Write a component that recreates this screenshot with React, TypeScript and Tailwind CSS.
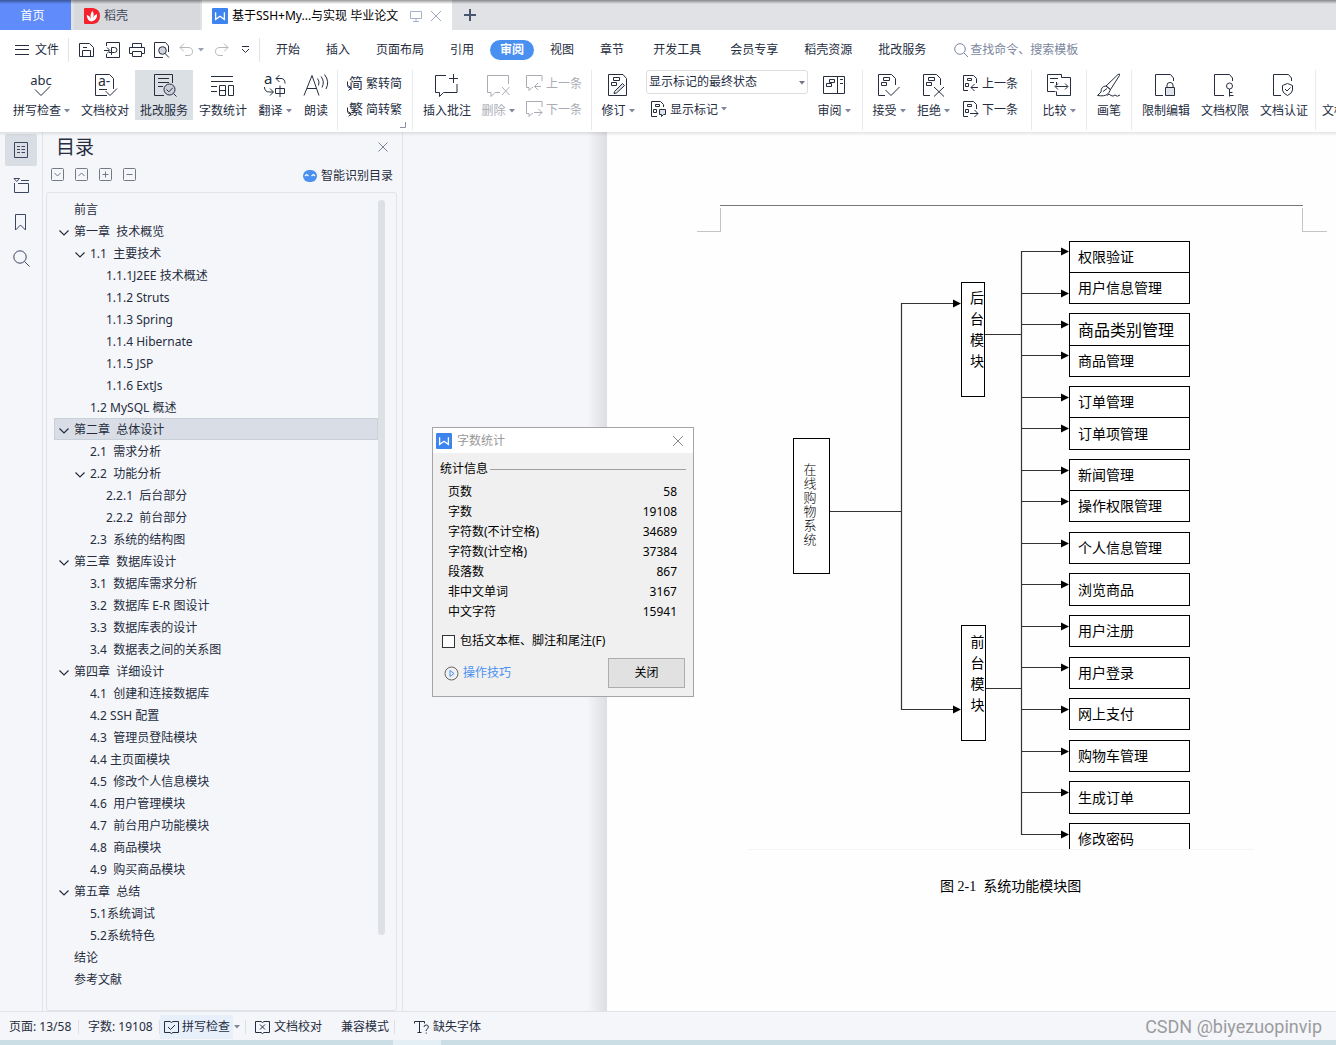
import type { ReactNode } from "react";

const SANS = "font-['Noto_Sans','Noto_Sans_CJK_SC',sans-serif]";

function Svg({ w, h, children, className = "" }: { w: number; h: number; children: ReactNode; className?: string }) {
  return (
    <svg
      width={w}
      height={h}
      viewBox={`0 0 ${w} ${h}`}
      fill="none"
      stroke="currentColor"
      strokeWidth="1"
      className={`shrink-0 overflow-visible ${className}`}
      aria-hidden="true"
    >
      {children}
    </svg>
  );
}

function Caret({ className = "text-[#7f879b]" }: { className?: string }) {
  return (
    <svg width="6" height="4" viewBox="0 0 6 4" className={`shrink-0 ${className}`} aria-hidden="true">
      <path d="M0 0h6L3 3.6z" fill="currentColor" />
    </svg>
  );
}

function WpsLogo() {
  return (
    <svg width="16" height="16" viewBox="0 0 16 16" className="shrink-0" aria-hidden="true">
      <rect width="16" height="16" rx="1" fill="#3d84ee" />
      <path d="M3.600 4.200v7.200l4.400-3.200 4.400 3.200V4.200" fill="none" stroke="#fff" strokeWidth="1.300" />
    </svg>
  );
}

/* ---------- ribbon drawings ---------- */

const DOC = "M17.500 12V5.500L13.500 1.500H.5V22.500H7";

const SpellIcon = () => (
  <Svg w={24} h={24}>
    <text x="11" y="12" textAnchor="middle" fontSize="13" fill="currentColor" stroke="none">abc</text>
    <path d="M5 16.500l6 6 9-9" />
  </Svg>
);
const ProofIcon = () => (
  <Svg w={24} h={24}>
    <path d="M14 22.500H2.500V1.500H16.500L20.500 5.500V16" />
    <text x="5" y="13" fontSize="14" fill="currentColor" stroke="none">a-</text>
    <path d="M6 16.500h8M12.500 18l4.500 4.500 7-7" />
  </Svg>
);
const CorrectIcon = () => (
  <Svg w={24} h={24}>
    <path d="M12 22.500H2.500V1.500H20.500V10M6 5.500h11M6 9.500h11M6 13.500h5" />
    <circle cx="17.500" cy="16.500" r="5.500" fill="#c9ced8" />
    <path d="M14.500 16.500l2.300 2.300 4-4M21.500 20.500l3 3" />
  </Svg>
);
const CountIcon = () => (
  <Svg w={24} h={24}>
    <path d="M0 3.500h22M0 8.500h22M0 13.500h6M0 18.500h6M9 12.500h5.500v10H8.500v-10zM8.500 17.500h6M17.500 12.500h5v10h-5z" />
  </Svg>
);
const TranslateIcon = () => (
  <Svg w={24} h={24}>
    <text x="1" y="11" fontSize="15" fill="currentColor" stroke="none">a</text>
    <path d="M16.500 2L13 5.500 16.500 9M13 5.500h5q4 0 4 5M1.500 14q0 5 5 5h3.500M7 15.500l3.500 3.500L7 22.500M12.500 15.500h9v5h-9zM17 12.500V24" />
  </Svg>
);
const ReadIcon = () => (
  <Svg w={26} h={24}>
    <path d="M1 22.500L9 2.500l7 20M4 15.500h9.500M14.500 5.500q2.500 3 1 7M18 3.500q4 5 1 11M21.500 1.500q5.500 7 1.500 14.500" />
  </Svg>
);
const CommentIcon = () => (
  <Svg w={26} h={24}>
    <path d="M12 2.500H1.500v17h4v4l4-4h13.500V11M19.500 1v9M15 5.500h9" />
  </Svg>
);
const DeleteIcon = () => (
  <Svg w={24} h={24}>
    <path d="M22.500 11V2.500H1.500v17h3.500v4l4-4h5M16 14l7.500 8M23.500 14L16 22" />
  </Svg>
);
const ReviseIcon = () => (
  <Svg w={20} h={24}>
    <path d="M.5 1.500H15L18.500 5.500V22.500H.5zM5.500 4.500h6v3h-6zM3.500 9.500h5v3h-5z" />
    <path d="M6.500 18.500l8-8 2 2-8 7.500-2.500.5z" fill="#dfe3ea" />
  </Svg>
);
const PaneIcon = () => (
  <Svg w={22} h={24}>
    <path d="M.5 3.500h21v17H.5zM14.500 3.500v17M6.500 6.500h5v3h-5zM3.500 10.500h5v3h-5zM17 6.500h3M17 10.500h3" />
  </Svg>
);
const AcceptIcon = () => (
  <Svg w={22} h={24}>
    <path d={DOC} />
    <path d="M5.500 4.500h6v3h-6zM3.500 9.500h5v3h-5zM7.500 17l5.500 5.500 8.500-8.500" />
  </Svg>
);
const RejectIcon = () => (
  <Svg w={22} h={24}>
    <path d={DOC} />
    <path d="M5.500 4.500h6v3h-6zM3.500 9.500h5v3h-5zM11 14l10 9.500M21 14l-10 9.500" />
  </Svg>
);
const CompareIcon = () => (
  <Svg w={26} h={24}>
    <path d="M9.500 18.500H1.500V1.500h14V4.500M4 5.500h8M4 9.500h4M15.500 4.500h9v18h-14v-4M10.500 12V9M9.500 13.500h12M12 10.500l-3 3 3 3M19 10.500l3 3-3 3" />
  </Svg>
);
const BrushIcon = () => (
  <Svg w={26} h={24}>
    <path d="M10 13L22 1.500q2-1.500 1.500 1L14.500 16.500zM10 13q-5 0-5 6l-3.500 3.500q7 1 9.500-1 2.500-2 3.500-5zM7 18.500l4-3M11 22.500q2-3 4 0 2 1.500 4-.5 2 2.500 5 0" />
  </Svg>
);
const LockIcon = () => (
  <Svg w={22} h={24}>
    <path d="M18.500 8V5L15.500 1.500H.5V22.500H8" />
    <path d="M10.500 14.500h9v8h-9z" fill="#dfe3ea" />
    <path d="M12 14.500v-2.500q0-2.500 3-2.500t3 2.500v2.500" />
  </Svg>
);
const KeyIcon = () => (
  <Svg w={22} h={24}>
    <path d="M18.500 8V5L15.500 1.500H.5V22.500H10" />
    <circle cx="15.500" cy="13" r="3" />
    <path d="M15.500 16v7.500M15.500 19.500h3M15.500 22.500h4" />
  </Svg>
);
const ShieldIcon = () => (
  <Svg w={22} h={24}>
    <path d="M18.500 8V5L15.500 1.500H.5V22.500H8" />
    <path d="M14.500 10.500l5 2v4.500q0 3-5 5.500-5-2.500-5-5.500v-4.500zM12 16l2 2 3.500-3.500" />
  </Svg>
);
const SmallComment = ({ next = false }: { next?: boolean }) => (
  <Svg w={17} h={16}>
    <path d="M16 6V.5H.5v12h2.500v3l3-3h1" />
    <path d={next ? "M8 11.500h8M12.500 8l3.500 3.500-3.500 3.500" : "M15 11.500H8.500M12 8l-3.500 3.500L12 15"} />
  </Svg>
);
const SmallDoc = ({ next = false }: { next?: boolean }) => (
  <Svg w={16} h={16}>
    <path d="M5 15.500H.5V.5h10l3 3V8M4.500 3.500h4v2h-4zM2.500 8.500h3v3h-3z" />
    <path d={next ? "M7 12.500h8M11.500 9l3.500 3.500-3.500 3.500" : "M15 12.500H8M11.500 9L8 12.500l3.500 3.500"} />
  </Svg>
);
const MarkupIcon = () => (
  <Svg w={16} h={16}>
    <path d="M6 15.500H.5V.5h9l3 3V6M4.500 3.500h4v2h-4zM2.500 8.500h3v3h-3z" />
    <path d="M8.500 8.500h6v5h-2l-2 2v-2h-2z" fill="#dfe3ea" />
  </Svg>
);
const Convert = ({ glyph }: { glyph: string }) => (
  <Svg w={16} h={16}>
    <text x="2" y="13" fontSize="14" fill="currentColor" stroke="none">{glyph}</text>
    <path d="M.5 6.500v3.500q0 3 3 3M1.500 10.500L4 13l-2.500 2.500" />
  </Svg>
);

/* ---------- ribbon parts ---------- */

function Big({ icon, label, caret, w, active, muted }: { icon: ReactNode; label: string; caret?: boolean; w: string; active?: boolean; muted?: boolean }) {
  return (
    <button
      type="button"
      disabled={muted}
      className={`flex h-[50px] shrink-0 flex-col items-center pt-[3px] ${w} ${active ? "bg-[#dbe0e5]" : ""} ${muted ? "text-[#a9acb3]" : ""}`}
    >
      {icon}
      <span className="mt-1.5 flex items-center gap-[3px] leading-4 whitespace-nowrap">
        {label}
        {caret && <Caret />}
      </span>
    </button>
  );
}

function Small({ icon, label, muted, caret }: { icon: ReactNode; label: string; muted?: boolean; caret?: boolean }) {
  return (
    <button
      type="button"
      disabled={muted}
      className={`flex h-[26px] items-center gap-[3px] leading-4 whitespace-nowrap ${muted ? "text-[#a9acb3]" : ""}`}
    >
      {icon}
      <span className="pt-0.5">{label}</span>
      {caret && <Caret />}
    </button>
  );
}

function Group({ children, className = "" }: { children: ReactNode; className?: string }) {
  return <div className={`relative flex h-[60px] shrink-0 border-r border-[#e9eaed] ${className}`}>{children}</div>;
}

function Ribbon() {
  return (
    <div className="flex h-[66px] overflow-hidden bg-white pt-1">
      <Group className="gap-px pr-[3px] pl-2">
        <Big w="w-[67px]" icon={<SpellIcon />} label="拼写检查" caret />
        <Big w="w-[58px]" icon={<ProofIcon />} label="文档校对" />
        <Big w="w-[58px]" icon={<CorrectIcon />} label="批改服务" active />
        <Big w="w-[58px]" icon={<CountIcon />} label="字数统计" />
        <Big w="w-[44px]" icon={<TranslateIcon />} label="翻译" caret />
        <Big w="w-[36px]" icon={<ReadIcon />} label="朗读" />
      </Group>
      <Group className="w-[75px] flex-col pl-[9px]">
        <Small icon={<Convert glyph="简" />} label="繁转简" />
        <Small icon={<Convert glyph="繁" />} label="简转繁" />
        <Svg w={6} h={6} className="absolute right-1.5 bottom-0.5 text-[#8a90a0]">
          <path d="M5.500 0v5.500H0" />
        </Svg>
      </Group>
      <Group className="w-[179px] pl-[5px]">
        <Big w="w-[58px]" icon={<CommentIcon />} label="插入批注" />
        <Big w="w-[44px]" icon={<DeleteIcon />} label="删除" caret muted />
        <div className="ml-1.5">
          <Small icon={<SmallComment />} label="上一条" muted />
          <Small icon={<SmallComment next />} label="下一条" muted />
        </div>
      </Group>
      <Group className="w-[271px] pl-1">
        <Big w="w-[44px]" icon={<ReviseIcon />} label="修订" caret />
        <div className="ml-1.5 w-[162px]">
          <div className="relative h-[26px]">
            <select
              aria-label="显示标记状态"
              className="h-6 w-full appearance-none rounded-[3px] border border-[#dcdee3] bg-white pr-4 pl-0.5 text-xs"
            >
              <option>显示标记的最终状态</option>
            </select>
            <Caret className="pointer-events-none absolute top-[11px] right-[3px] text-[#6f7588]" />
          </div>
          <div className="pl-[5px]">
            <Small icon={<MarkupIcon />} label="显示标记" caret />
          </div>
        </div>
        <Big w="w-[52px]" icon={<PaneIcon />} label="审阅" caret />
      </Group>
      <Group className="w-[169px] pl-1">
        <Big w="w-[44px]" icon={<AcceptIcon />} label="接受" caret />
        <Big w="w-[45px]" icon={<RejectIcon />} label="拒绝" caret />
        <div className="ml-[7px]">
          <Small icon={<SmallDoc />} label="上一条" />
          <Small icon={<SmallDoc next />} label="下一条" />
        </div>
      </Group>
      <Group className="px-[5px]">
        <Big w="w-[44px]" icon={<CompareIcon />} label="比较" caret />
      </Group>
      <Group className="px-1">
        <Big w="w-[36px]" icon={<BrushIcon />} label="画笔" />
      </Group>
      <Group className="gap-px pr-0.5 pl-[5px]">
        <Big w="w-[58px]" icon={<LockIcon />} label="限制编辑" />
        <Big w="w-[58px]" icon={<KeyIcon />} label="文档权限" />
        <Big w="w-[58px]" icon={<ShieldIcon />} label="文档认证" />
      </Group>
      <div className="pl-px">
        <Big w="w-[58px]" icon={<div className="h-6" />} label="文档定稿" />
      </div>
    </div>
  );
}

/* ---------- title bar and menu ---------- */

function TitleBar() {
  return (
    <div className="relative flex h-[30px] bg-[#e1e2e6]">
      <button type="button" className="w-[71px] shrink-0 bg-[#5f8cfa] pt-0.5 pr-1.5 text-white">首页</button>
      <button type="button" className="ml-[3px] flex w-[126px] shrink-0 items-center gap-1 bg-[#d8d9dd] pt-0.5 pl-[10px] text-[#3f4759]">
        <svg width="16" height="16" viewBox="0 0 16 16" aria-hidden="true">
          <path d="M1 0h8q7 1 7 8t-7 8H1q-1 0-1-1V1q0-1 1-1z" fill="#f5222d" />
          <path d="M7.500 13.500Q4 13 3 9q-.5-1.500 0-2 3 1 4 4Q5.500 6 8.500 3q2 2.500.5 7 1-3 4-4 .5 6-5.500 7.500z" fill="#fff" />
        </svg>
        稻壳
      </button>
      <div className="ml-0.5 flex w-[250px] shrink-0 items-center bg-white pt-0.5 pl-[10px] text-black">
        <WpsLogo />
        <span className="ml-1 w-[174px] whitespace-nowrap">基于SSH+My...与实现 毕业论文</span>
        <Svg w={12} h={12} className="ml-1 text-[#a9b2cd]">
          <path d="M.5 1.500h11v7H.5zM6 8.500v3M3 11.500h6" />
        </Svg>
        <button type="button" aria-label="关闭标签" className="ml-2 text-[#a3acc6]">
          <Svg w={12} h={12}><path d="M1 1l10 10M11 1L1 11" /></Svg>
        </button>
      </div>
      <button type="button" aria-label="新建标签" className="ml-3 text-[#4a556f]">
        <Svg w={12} h={12}><path d="M6 0v12M0 6h12" strokeWidth="2" /></Svg>
      </button>
      <div className="pointer-events-none absolute inset-x-0 top-0 h-1 bg-linear-to-b from-black/40 to-transparent" />
    </div>
  );
}

const MENU = ["开始", "插入", "页面布局", "引用", "审阅", "视图", "章节", "开发工具", "会员专享", "稻壳资源", "批改服务"];

function MenuBar() {
  return (
    <div className="flex h-9 items-center bg-white pt-1 whitespace-nowrap">
      <button type="button" className="ml-[15px] flex items-center gap-1.5">
        <Svg w={14} h={12}><path d="M0 1.500h14M0 5.500h14M0 10.500h14" /></Svg>
        文件
      </button>
      <div className="ml-[9px] h-6 w-px bg-[#e1e3e7]" />
      <div className="ml-[10px] flex w-[180px] items-center">
        <button type="button" aria-label="保存">
          <Svg w={16} h={16}><path d="M.5 1.500h10l4 4v9H.5zM3.500 14.500v-6h8v6M4 5.500h4" /></Svg>
        </button>
        <button type="button" aria-label="输出为PDF" className="ml-[9px]">
          <Svg w={17} h={16}><path d="M2.500 4V.5h13v15h-13V12M0 8.500h5M3 5.500l3 3-3 3M7.500 13V5.500h3q2.500 0 2.500 2.500t-2.500 2.500H5" /></Svg>
        </button>
        <button type="button" aria-label="打印" className="ml-2">
          <Svg w={16} h={16}><path d="M3.500 5V1.500h9V5M3 11.500H.5v-6h15v6H13M3.500 9.500h9v5h-9z" /></Svg>
        </button>
        <button type="button" aria-label="打印预览" className="ml-[9px]">
          <Svg w={16} h={16}>
            <path d="M14.500 10V4l-3-3.500H.5v15H9" />
            <circle cx="8.500" cy="8.500" r="3.800" fill="#cfd3dc" />
            <path d="M11 11.500l4 4" />
          </Svg>
        </button>
        <button type="button" aria-label="撤销" className="ml-[9px] text-[#b5b7bd]">
          <Svg w={15} h={14}><path d="M5 .5L1 4.500l4 4M1 4.500h8q4.500 0 4.500 4t-4.500 4H6" /></Svg>
        </button>
        <span className="ml-1"><Caret className="text-[#9aa1b3]" /></span>
        <button type="button" aria-label="恢复" className="ml-2.5 text-[#b5b7bd]">
          <Svg w={15} h={14}><path d="M10 .5l4 4-4 4M14 4.500H6q-4.500 0-4.500 4t4.500 4h3" /></Svg>
        </button>
        <button type="button" aria-label="更多" className="ml-3">
          <Svg w={9} h={8}><path d="M1 .5h7M1 3l3.500 3.500L8 3" /></Svg>
        </button>
      </div>
      <div className="mr-4 h-6 w-px bg-[#e1e3e7]" />
      <nav className="flex gap-[26px]">
        {MENU.map((m) => (
          <button
            type="button"
            key={m}
            className={
              m === "审阅"
                ? "-mx-2.5 h-5 rounded-full bg-[#4a90f0] px-2.5 font-bold text-white"
                : m === "开发工具"
                  ? "mx-[3px] h-5"
                  : "h-5"
            }
          >
            {m}
          </button>
        ))}
      </nav>
      <label className="ml-7 flex items-center gap-0.5 text-[#7b869e]">
        <Svg w={14} h={14}><circle cx="6" cy="6" r="5.300" /><path d="M10 10l4 4" /></Svg>
        <input aria-label="查找命令、搜索模板" placeholder="查找命令、搜索模板" className="w-32 bg-transparent placeholder:text-[#7b869e] focus:outline-none" />
      </label>
    </div>
  );
}

/* ---------- outline ---------- */

type Row = [level: 0 | 1 | 2, text: string, open?: boolean];
const ROWS: Row[] = [
  [0, "前言"],
  [0, "第一章  技术概览", true],
  [1, "1.1  主要技术", true],
  [2, "1.1.1J2EE 技术概述"],
  [2, "1.1.2 Struts"],
  [2, "1.1.3 Spring"],
  [2, "1.1.4 Hibernate"],
  [2, "1.1.5 JSP"],
  [2, "1.1.6 ExtJs"],
  [1, "1.2 MySQL 概述"],
  [0, "第二章  总体设计", true],
  [1, "2.1  需求分析"],
  [1, "2.2  功能分析", true],
  [2, "2.2.1  后台部分"],
  [2, "2.2.2  前台部分"],
  [1, "2.3  系统的结构图"],
  [0, "第三章  数据库设计", true],
  [1, "3.1  数据库需求分析"],
  [1, "3.2  数据库 E-R 图设计"],
  [1, "3.3  数据库表的设计"],
  [1, "3.4  数据表之间的关系图"],
  [0, "第四章  详细设计", true],
  [1, "4.1  创建和连接数据库"],
  [1, "4.2 SSH 配置"],
  [1, "4.3  管理员登陆模块"],
  [1, "4.4 主页面模块"],
  [1, "4.5  修改个人信息模块"],
  [1, "4.6  用户管理模块"],
  [1, "4.7  前台用户功能模块"],
  [1, "4.8  商品模块"],
  [1, "4.9  购买商品模块"],
  [0, "第五章  总结", true],
  [1, "5.1系统调试"],
  [1, "5.2系统特色"],
  [0, "结论"],
  [0, "参考文献"],
];
const INDENT = ["pl-[5px]", "pl-[21px]", "pl-[37px]"];
const TOOLS: [string, string][] = [
  ["展开", "M3.500 5l3 3 3-3"],
  ["收起", "M3.500 8l3-3 3 3"],
  ["增加级别", "M6.500 3.500v6M3.500 6.500h6"],
  ["降低级别", "M3.500 6.500h6"],
];

function Rail() {
  const item = "flex size-8 items-center justify-center rounded-[2px]";
  return (
    <div className="flex w-[43px] shrink-0 flex-col gap-1 border-r border-[#e0e3e8] pt-0.5 pl-[5px] text-[#3b4660]">
      <button type="button" aria-label="目录" className={`${item} bg-[#d9dee5]`}>
        <Svg w={14} h={16}><path d="M.5.500h13v15H.500zM3 4.500h3M7.500 4.500h3.500M3 7.500h3M7.500 7.500h3.500M3 10.500h3M7.500 10.500h3.500" /></Svg>
      </button>
      <button type="button" aria-label="章节" className={item}>
        <Svg w={17} h={16}><path d="M1 .5h5.500L3.800 3.500zM8 2.500h8M1.500 5v9.500h14v-9H5" /></Svg>
      </button>
      <button type="button" aria-label="书签" className={item}>
        <Svg w={12} h={17}><path d="M.5.500h10v15.500l-5-5-5 5z" /></Svg>
      </button>
      <button type="button" aria-label="查找" className={item}>
        <Svg w={17} h={17}><circle cx="7" cy="7" r="6.200" /><path d="M11.500 11.500l5 5" /></Svg>
      </button>
    </div>
  );
}

function Outline() {
  return (
    <aside className="flex w-[360px] shrink-0 flex-col border-r border-[#e0e3e8] pr-[5px] pl-[3px]">
      <div className="flex h-[30px] items-center justify-between pr-[9px] pl-[10px]">
        <h2 className="text-[19px] leading-7">目录</h2>
        <button type="button" aria-label="关闭目录" className="text-[#7b839a]">
          <Svg w={10} h={10}><path d="M.5.500l9 9M9.500.500l-9 9" /></Svg>
        </button>
      </div>
      <div className="flex h-[30px] items-center pr-1 pb-0.5 pl-[5px]">
        <div className="flex gap-[11px] pb-1 text-[#737987]">
          {TOOLS.map(([name, d]) => (
            <button type="button" key={name} aria-label={name}>
              <Svg w={13} h={13}><rect x=".5" y=".5" width="12" height="12" rx="1" /><path d={d} /></Svg>
            </button>
          ))}
        </div>
        <button type="button" className="ml-auto flex items-center gap-1">
          <svg width="14" height="12" viewBox="0 0 14 12" aria-hidden="true">
            <rect width="14" height="12" rx="6" fill="#4a90f0" />
            <path d="M2 6l1.500-1.500L5.500 6M8.500 6l2-1.500L12 6" fill="none" stroke="#fff" strokeWidth="1.200" />
          </svg>
          智能识别目录
        </button>
      </div>
      <div className="relative flex-1 rounded-[3px] border border-[#e0e3e8] pt-[5px] pr-[18px] pb-5 pl-[7px]">
        <ul>
          {ROWS.map(([level, text, open]) => (
            <li
              key={text}
              className={`flex h-[22px] items-center pt-0.5 whitespace-pre ${INDENT[level]} ${text === "第二章  总体设计" ? "bg-[#d9dde5] outline outline-1 -outline-offset-1 outline-[#c8d0da]" : ""}`}
            >
              <span className="mr-[5px] flex w-[10px] shrink-0 pt-0.5">
                {open && <Svg w={10} h={6}><path d="M.5.500l4.500 4.500L9.500.500" strokeWidth="1.200" /></Svg>}
              </span>
              {text}
            </li>
          ))}
        </ul>
        <div className="absolute top-[7px] right-[11px] h-9/10 w-[7px] rounded-full bg-[#dde1e5]" />
      </div>
    </aside>
  );
}

/* ---------- document ---------- */

const LEAVES: [top: string, label: string, arrow: number, size?: string][] = [
  ["top-0 h-8", "权限验证", 10],
  ["top-[31px] h-8", "用户信息管理", 52],
  ["top-[72px] h-[33px]", "商品类别管理", 83, "text-base"],
  ["top-[104px] h-8", "商品管理", 114],
  ["top-[145px] h-8", "订单管理", 156],
  ["top-[176px] h-[33px]", "订单项管理", 187],
  ["top-[218px] h-8", "新闻管理", 229],
  ["top-[249px] h-8", "操作权限管理", 260],
  ["top-[291px] h-8", "个人信息管理", 302],
  ["top-[332px] h-[33px]", "浏览商品", 343],
  ["top-[374px] h-8", "用户注册", 385],
  ["top-[416px] h-8", "用户登录", 426],
  ["top-[457px] h-8", "网上支付", 468],
  ["top-[499px] h-8", "购物车管理", 510],
  ["top-[540px] h-[33px]", "生成订单", 551],
  ["top-[582px] h-8", "修改密码", 593],
];

function Diagram() {
  const vertical = "absolute border border-black bg-white text-center";
  return (
    <figure className="relative ml-[141px] h-[609px] w-[506px] overflow-hidden border-b border-[#f4f4f4] text-sm text-black">
      <svg width="506" height="609" viewBox="0 0 506 609" className="absolute" aria-hidden="true">
        <g fill="none" stroke="#333" strokeWidth="1.200">
          <path d="M82 270.500H153M153.500 62V468.500M153 62.500H206M153 468.500H206M237 93.500H273M237 447.500H273M273.500 10.500V593.500" />
          {LEAVES.map(([, label, y]) => <path key={label} d={`M273 ${y}.5H314`} />)}
        </g>
        <path d="M205 58.500l8 4-8 4zM205 464.500l8 4-8 4z" fill="#000" />
        {LEAVES.map(([, label, y]) => <path key={label} d={`M313 ${y - 4 + 0.5}l8 4-8 4z`} fill="#000" />)}
      </svg>
      <div className={`${vertical} top-[197px] left-[45px] h-[136px] w-[37px] pt-[23px] pr-[11px] pl-[8px] text-[13px] leading-[14px] font-light`}>
        在线购物系统
      </div>
      <div className={`${vertical} top-[41px] left-[213px] h-[115px] w-[24px] overflow-hidden pt-1 pl-[8px] leading-[21px] break-all`}>后台模块</div>
      <div className={`${vertical} top-[384px] left-[213px] h-[116px] w-[25px] overflow-hidden pt-[5px] pl-[8px] leading-[21px] break-all`}>前台模块</div>
      {LEAVES.map(([pos, label, , size]) => (
        <div key={label} className={`absolute left-[321px] flex w-[121px] items-center border border-black bg-white pb-0.5 pl-[8px] leading-5 ${pos} ${size ?? ""}`}>
          {label}
        </div>
      ))}
    </figure>
  );
}

function Page() {
  return (
    <div className="min-w-0 flex-1 overflow-hidden bg-[#fefefe] pt-[73px] font-['Noto_Sans_CJK_SC',sans-serif]">
      <div className="ml-[113px] w-[583px] border-t border-[#777]" />
      <div className="mt-0.5 ml-[90px] flex h-6 w-[630px] items-stretch">
        <div className="w-6 border-r border-b border-[#c4c4c4]" />
        <div className="flex-1" />
        <div className="w-[25px] border-b border-l border-[#c4c4c4]" />
      </div>
      <div className="h-[9px]" />
      <Diagram />
      <p className="mt-[27px] ml-[333px] font-['Liberation_Serif','Noto_Sans_CJK_SC',serif] text-sm leading-5 whitespace-pre text-black">
        图 2-1  系统功能模块图
      </p>
    </div>
  );
}

/* ---------- dialog ---------- */

const STATS = [
  ["页数", "58"],
  ["字数", "19108"],
  ["字符数(不计空格)", "34689"],
  ["字符数(计空格)", "37384"],
  ["段落数", "867"],
  ["非中文单词", "3167"],
  ["中文字符", "15941"],
];

function CountDialog() {
  return (
    <div role="dialog" aria-label="字数统计" className="absolute top-[295px] left-[432px] h-[270px] w-[262px] border border-[#a5a5a5] bg-[#f0f0f0] text-black">
      <div className="flex h-[25px] items-center bg-white pr-[9px] pl-[3px] text-[#999]">
        <WpsLogo />
        <span className="ml-[5px]">字数统计</span>
        <button type="button" aria-label="关闭窗口" className="ml-auto text-[#888]">
          <Svg w={12} h={12}><path d="M1 1l10 10M11 1L1 11" /></Svg>
        </button>
      </div>
      <div className="flex items-center gap-0.5 px-[7px] pt-2 leading-4">
        统计信息
        <div className="h-px flex-1 bg-[#a0a0a0]" />
      </div>
      <table className="mt-[5px] ml-[15px] w-[229px]">
        <tbody>
          {STATS.map(([k, v]) => (
            <tr key={k} className="h-5 leading-5">
              <th className="p-0 text-left font-normal">{k}</th>
              <td className="p-0 text-right">{v}</td>
            </tr>
          ))}
        </tbody>
      </table>
      <label className="mt-[11px] ml-[9px] flex items-center gap-[5px] leading-4">
        <input type="checkbox" className="size-[13px] appearance-none border border-[#333] bg-white" />
        包括文本框、脚注和尾注(F)
      </label>
      <div className="mt-[9px] flex items-center justify-between pr-2 pl-[11px]">
        <a href="#tips" className="flex items-center gap-1 text-[#4a90f0]">
          <Svg w={15} h={15}>
            <circle cx="7.500" cy="7.500" r="6.500" stroke="#666" />
            <path d="M6 4.500v6l4-3z" />
          </Svg>
          操作技巧
        </a>
        <button type="button" className="h-[30px] w-[77px] border border-[#adadad] bg-[#e1e1e1]">关闭</button>
      </div>
    </div>
  );
}

/* ---------- status bar ---------- */

function StatusBar() {
  const sep = <span className="h-[14px] w-px bg-[#dcdfe4]" />;
  return (
    <footer>
      <div className="relative flex h-[29px] items-center border-t border-[#e0e3e8] bg-[#f5f6f9] pt-0.5 pl-[9px] whitespace-nowrap">
        <span className="w-[69px]">页面: 13/58</span>
        {sep}
        <span className="ml-[9px] w-[71px]">字数: 19108</span>
        {sep}
        <button type="button" className="flex h-6 items-center gap-[3px] bg-[#e7effb] pr-[3px] pl-1">
          <Svg w={15} h={14}><path d="M6 1.500H.5v11H6l1.500 1 1.500-1h5.500v-11H9l-1.500 1zM4 7l2.500 2.500L11 5" /></Svg>
          拼写检查
        </button>
        <span className="mr-[5px] ml-px"><Caret /></span>
        {sep}
        <button type="button" className="ml-[9px] flex items-center gap-1">
          <Svg w={15} h={14}><path d="M6 1.500H.5v11H6l1.500 1 1.500-1h5.500v-11H9l-1.500 1zM5 4.500l5 5M10 4.500l-5 5" /></Svg>
          文档校对
        </button>
        <span className="mr-[5px] ml-[19px]">兼容模式</span>
        {sep}
        <button type="button" className="ml-[19px] flex items-center gap-1">
          <Svg w={15} h={14}><path d="M.5 3.500v-2h10v2M5.500 1.500v11M3.500 12.500h4M10 7q0-2 2.200-2t2.200 2q0 1.500-2.200 3v1M12.200 12.500v1.200" /></Svg>
          缺失字体
        </button>
        <span className="absolute right-[14px] bottom-px font-['Roboto',sans-serif] text-[18px] leading-6 text-[#9a9ca0]">CSDN @biyezuopinvip</span>
      </div>
      <div className="h-[5px] bg-[#cbdee5] pl-[393px]">
        <div className="h-full w-12 bg-[#e4eef5]" />
      </div>
    </footer>
  );
}

export default function App() {
  return (
    <div className={`flex min-h-screen flex-col overflow-hidden bg-[#f5f6f9] text-xs text-[#252d3f] ${SANS}`}>
      <TitleBar />
      <MenuBar />
      <Ribbon />
      <main className="relative flex flex-1">
        <div className="pointer-events-none absolute inset-x-0 top-0 z-10 h-1 bg-linear-to-b from-black/10 to-transparent" />
        <Rail />
        <Outline />
        <div className="flex w-[204px] shrink-0 justify-end">
          <div className="w-5 bg-linear-to-r from-transparent to-[#dcdee2]" />
        </div>
        <Page />
        <CountDialog />
      </main>
      <StatusBar />
    </div>
  );
}
